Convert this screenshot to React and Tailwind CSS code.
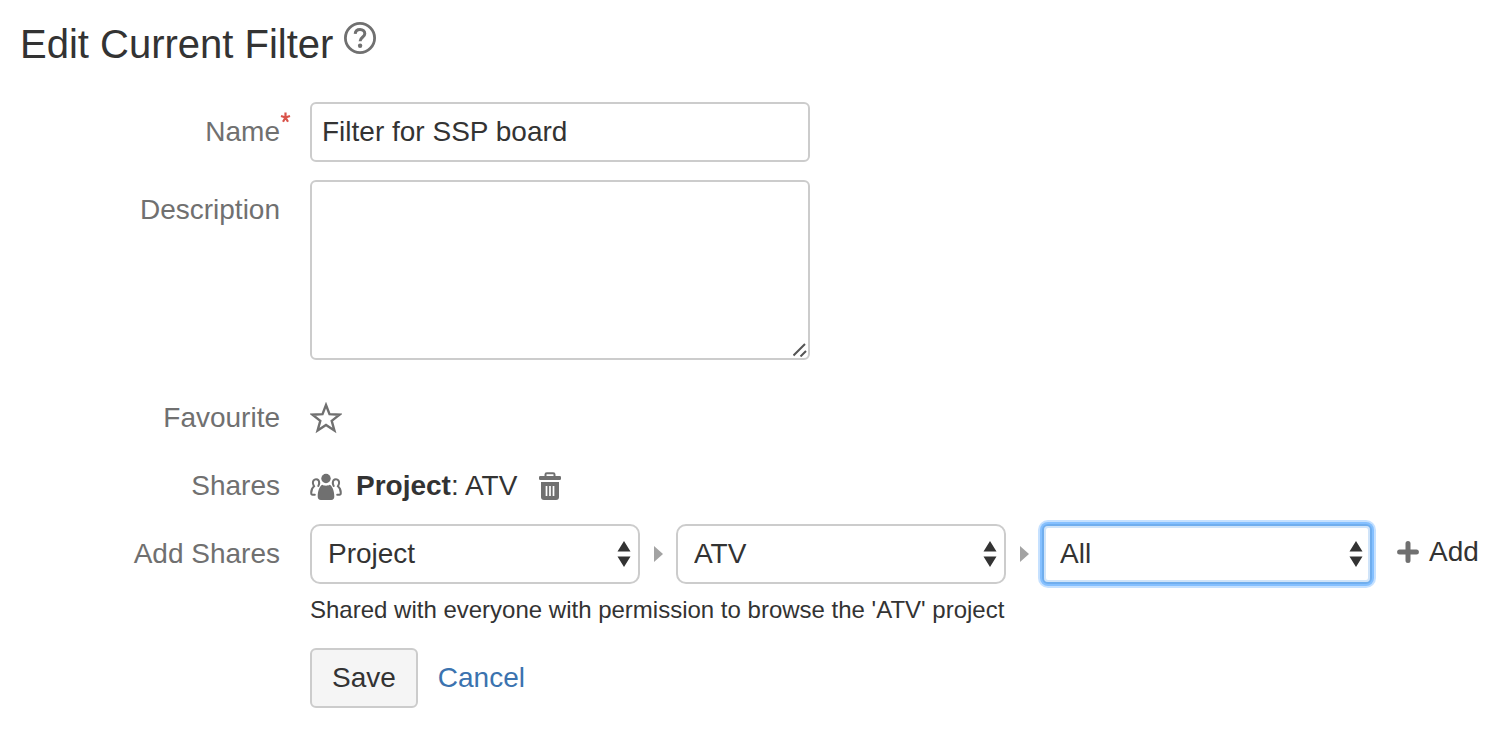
import React, { useState } from 'react'

const shareSelects = [
  { id: 'share-type', label: 'Share type', options: ['Project', 'Group'] },
  { id: 'share-project', label: 'Project', options: ['ATV', 'SSP'] },
  { id: 'share-role', label: 'Role', options: ['All', 'Developers', 'Users'], focused: true },
]

function HelpIcon() {
  return (
    <svg className="h-8 w-8" viewBox="0 0 32 32" fill="none" stroke="#707070" aria-hidden="true">
      <circle cx="16" cy="16" r="14.6" strokeWidth="2.8" />
      <path d="M11.2 11.8c.2-2.800 2-4.300 4.800-4.300 2.900 0 4.800 1.700 4.800 4.200 0 3.600-4.700 3.600-4.700 7.500" strokeWidth="3" />
      <circle cx="16.100" cy="23.800" r="2.200" fill="#707070" stroke="none" />
    </svg>
  )
}

function StarIcon() {
  return (
    <svg className="h-8 w-8" viewBox="0 0 32 32" fill="none" stroke="#707070" strokeWidth="2.4" aria-hidden="true">
      <path d="M16 3l3.500 9.200 10 .5-7.800 6.200 2.700 9.600-8.400-5.500-8.400 5.500 2.700-9.600-7.800-6.200 10-.5z" />
    </svg>
  )
}

function PeopleIcon() {
  return (
    <svg className="h-8 w-8" viewBox="0 0 32 32" fill="none" aria-hidden="true">
      <g stroke="#707070" strokeWidth="2" strokeLinecap="round">
        <path d="M9.200 13c0-2.100-1.100-3.800-3.200-3.800S2.800 10.900 2.900 13c.1 1.500.8 2.300 1.200 3.300C2.600 17.400 1.200 19.500 1.200 23c0 1.200.4 1.800 1.400 1.800h2.200" />
        <path d="M22.800 13c0-2.100 1.100-3.800 3.200-3.800s3.200 1.700 3.100 3.800c-.1 1.500-.8 2.300-1.200 3.300 1.500 1.100 2.900 3.200 2.900 6.700 0 1.200-.4 1.800-1.400 1.800h-2.200" />
        <path d="M9.200 13c0 1.300-.6 2-.9 3M22.800 13c0 1.300.6 2 .9 3" />
      </g>
      <circle cx="16" cy="8.500" r="4.700" fill="#707070" />
      <path d="M12.300 14.800c1.200.6 2 .9 3.700.9s2.500-.3 3.700-.9c2.500 1.200 4.600 5.700 4.600 11.700 0 2.200-1.100 3.500-3.100 3.500H10.800c-2 0-3.100-1.300-3.100-3.500 0-6 2.100-10.500 4.600-11.700z" fill="#707070" />
    </svg>
  )
}

function TrashIcon() {
  return (
    <svg className="h-7 w-6" viewBox="0 0 24 28" fill="none" aria-hidden="true">
      <path d="M7.500 4V2.500c0-.8.5-1.300 1.300-1.300h6.400c.8 0 1.300.5 1.300 1.300V4" stroke="#707070" strokeWidth="2" />
      <rect x="1" y="4" width="22" height="4" rx="1.200" fill="#707070" />
      <path d="M3 10h18v15c0 2-1 3-3 3H6c-2 0-3-1-3-3z" fill="#707070" />
      <path d="M8.500 14v10M12 14v10M15.500 14v10" stroke="#fff" strokeWidth="1.700" />
    </svg>
  )
}

function PlusIcon() {
  return (
    <svg className="h-[22px] w-[22px]" viewBox="0 0 22 22" stroke="#707070" strokeWidth="5" strokeLinecap="round" aria-hidden="true">
      <path d="M11 2.600v16.800M2.600 11h16.800" />
    </svg>
  )
}

function Separator() {
  return (
    <svg className="h-4 w-9 shrink-0" viewBox="0 0 36 16" aria-hidden="true">
      <path d="M14 0l9 8-9 8z" fill="#a3a3a3" />
    </svg>
  )
}

function ShareSelect({ id, label, options, focused }) {
  return (
    <div className="relative w-[330px]">
      <select
        id={id}
        aria-label={label}
        className={`h-[60px] w-full appearance-none bg-white pr-10 pl-4 text-[#333] outline-none ${
          focused
            ? 'rounded-md border-2 border-[#70aeee] shadow-[0_0_0_2px_#85c0ff,0_0_0_4px_#c6e1ff,inset_0_0_0_2px_#d0e4f9]'
            : 'rounded-[10px] border-2 border-[#ccc]'
        }`}
      >
        {options.map((option) => (
          <option key={option}>{option}</option>
        ))}
      </select>
      <svg className="pointer-events-none absolute top-[17px] right-[9px] h-[26px] w-[14px]" viewBox="0 0 14 26" fill="#333" aria-hidden="true">
        <path d="M7 0l6.500 10.500H.5zM7 26L.5 15.500h13z" />
      </svg>
    </div>
  )
}

function Row({ label, htmlFor, required, className = '', children }) {
  const Label = htmlFor ? 'label' : 'span'
  return (
    <div className={`flex gap-[30px] ${className}`}>
      <Label className="relative w-[280px] shrink-0 pt-[14px] text-right leading-8 text-[#707070]" htmlFor={htmlFor}>
        {label}
        {required && (
          <svg className="absolute top-[10px] left-full h-[11px] w-[11px]" viewBox="0 0 11 11" stroke="#d9534a" strokeWidth="2.200" aria-hidden="true">
            <path d="M5.500 5.500V.5M5.500 5.500L1 4M5.500 5.500L10 4M5.500 5.500l-2.500 4.200M5.500 5.500l2.500 4.200" />
          </svg>
        )}
      </Label>
      <div className="min-w-0 flex-1">{children}</div>
    </div>
  )
}

export default function App() {
  const [name, setName] = useState('Filter for SSP board')
  const [description, setDescription] = useState('')

  return (
    <main className="bg-white pt-[20px] pb-7 font-['Liberation_Sans',Arial,sans-serif] text-[28px] leading-8 text-[#333]">
      <header className="flex items-start gap-[11px] pl-5">
        <h1 className="text-[40px] leading-12">Edit Current Filter</h1>
        <button type="button" aria-label="Help" className="mt-[2px]">
          <HelpIcon />
        </button>
      </header>

      <form className="mt-[34px]" onSubmit={(e) => e.preventDefault()}>
        <Row label="Name" htmlFor="name" required>
          <input
            id="name"
            type="text"
            required
            value={name}
            onChange={(e) => setName(e.target.value)}
            className="block h-[60px] w-full max-w-[500px] rounded-md border-2 border-[#ccc] px-[10px]"
          />
        </Row>

        <Row label="Description" htmlFor="description" className="mt-[18px]">
          <div className="relative max-w-[500px]">
            <textarea
              id="description"
              value={description}
              onChange={(e) => setDescription(e.target.value)}
              className="block h-[180px] w-full resize-none rounded-md border-2 border-[#ccc] px-[10px] py-2"
            />
            <svg className="pointer-events-none absolute right-[3px] bottom-[3px] h-[14px] w-[14px]" viewBox="0 0 14 14" stroke="#555" strokeWidth="2" aria-hidden="true">
              <path d="M.5 12.500L12 1M7.500 13.500l5.500-5.500" />
            </svg>
          </div>
        </Row>

        <Row label="Favourite" className="mt-[28px]">
          <button type="button" aria-label="Add to favourites" className="mt-[14px] block">
            <StarIcon />
          </button>
        </Row>

        <Row label="Shares" className="mt-[22px]">
          <div className="flex items-center pt-[14px]">
            <PeopleIcon />
            <span className="ml-[14px]">
              <strong>Project</strong>: ATV
            </span>
            <button type="button" aria-label="Delete share" className="ml-[21px]">
              <TrashIcon />
            </button>
          </div>
        </Row>

        <Row label="Add Shares" htmlFor="share-type" className="mt-[22px]">
          <div className="flex items-center">
            {shareSelects.map((select, i) => (
              <React.Fragment key={select.id}>
                {i > 0 && <Separator />}
                <ShareSelect {...select} />
              </React.Fragment>
            ))}
            <button type="button" className="mb-1 ml-[25px] flex items-center gap-[10px]">
              <PlusIcon />
              Add
            </button>
          </div>
          <p className="mt-[10px] text-[24px]">Shared with everyone with permission to browse the 'ATV' project</p>
        </Row>

        <div className="mt-[22px] flex items-center gap-5 pl-[310px]">
          <button type="submit" className="h-[60px] rounded-md border-2 border-[#ccc] bg-[#f5f5f5] px-5">
            Save
          </button>
          <a href="#cancel" className="text-[#3b73af]">
            Cancel
          </a>
        </div>
      </form>
    </main>
  )
}
